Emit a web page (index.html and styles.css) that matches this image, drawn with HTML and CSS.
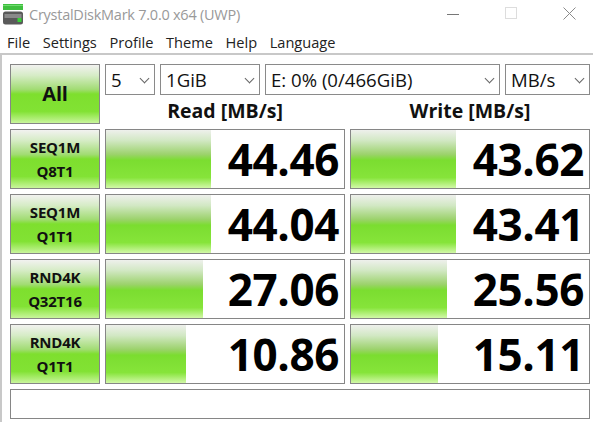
FILE: index.html
```html
<!DOCTYPE html>
<html>
<head>
<meta charset="utf-8">
<link rel="stylesheet" href="styles.css">
</head>
<body>
<div class="window">
  <div class="titlebar">
    <svg class="appicon" width="21" height="21" viewBox="0 0 21 21">
      <rect x="0" y="0" width="20" height="6" fill="#3fbf3f"/>
      <rect x="0" y="1" width="20" height="1" fill="#6fdc6f"/>
      <rect x="0" y="7.5" width="20" height="13" rx="2.5" fill="#5a5a5a"/>
      <rect x="1.5" y="10" width="17" height="4" fill="#8a8a8a"/>
      <rect x="14.5" y="14" width="4" height="4" fill="#37d137"/>
    </svg>
    <span class="title">CrystalDiskMark 7.0.0 x64 (UWP)</span>
    <div class="controls">
      <span class="ctl min"></span>
      <span class="ctl max"></span>
      <svg class="ctl close" width="13" height="13" viewBox="0 0 13 13"><path d="M0.5 0.5 L12.5 12.5 M12.5 0.5 L0.5 12.5" stroke="#8a8a8a" stroke-width="1"/></svg>
    </div>
  </div>
  <div class="menubar">
    <span>File</span><span>Settings</span><span>Profile</span><span>Theme</span><span>Help</span><span>Language</span>
  </div>
  <div class="main">
    <div class="grid">
      <div class="btn all">All</div>
      <div class="topright">
        <div class="combos">
          <div class="combo c1"><span>5</span><i class="chev"></i></div>
          <div class="combo c2"><span>1GiB</span><i class="chev"></i></div>
          <div class="combo c3"><span>E: 0% (0/466GiB)</span><i class="chev"></i></div>
          <div class="combo c4"><span>MB/s</span><i class="chev"></i></div>
        </div>
        <div class="heads">
          <div class="head">Read [MB/s]</div>
          <div class="head">Write [MB/s]</div>
        </div>
      </div>

      <div class="btn">SEQ1M<br>Q8T1</div>
      <div class="cell"><div class="bar" style="width:105px"></div><span class="val">44.46</span></div>
      <div class="cell"><div class="bar" style="width:105px"></div><span class="val">43.62</span></div>

      <div class="btn">SEQ1M<br>Q1T1</div>
      <div class="cell"><div class="bar" style="width:105px"></div><span class="val">44.04</span></div>
      <div class="cell"><div class="bar" style="width:105px"></div><span class="val">43.41</span></div>

      <div class="btn">RND4K<br>Q32T16</div>
      <div class="cell"><div class="bar" style="width:97px"></div><span class="val">27.06</span></div>
      <div class="cell"><div class="bar" style="width:96px"></div><span class="val">25.56</span></div>

      <div class="btn">RND4K<br>Q1T1</div>
      <div class="cell"><div class="bar" style="width:80px"></div><span class="val">10.86</span></div>
      <div class="cell"><div class="bar" style="width:87px"></div><span class="val">15.11</span></div>

      <div class="status"></div>
    </div>
  </div>
</div>
</body>
</html>
```

FILE: styles.css
```css
* { box-sizing: border-box; }
html, body { margin: 0; padding: 0; background: #fff; }
body { width: 593px; height: 422px; overflow: hidden; font-family: "Open Sans", "Noto Sans", sans-serif; }

.titlebar { height: 32px; display: flex; align-items: center; position: relative; }
.appicon { margin-left: 3px; margin-top: -3px; }
.title { margin-left: 5px; font-size: 14.5px; color: #999; margin-top: -3px; letter-spacing: -0.25px; }
.controls { margin-left: auto; display: flex; align-items: center; height: 32px; }
.ctl { display: block; }
.min { width: 12px; height: 1px; background: #777; margin-right: 46px; margin-top: -4px; }
.max { width: 12px; height: 12px; border: 1px solid #ddd; margin-right: 46px; margin-top: -6px; }
.close { margin-right: 17px; margin-top: -6px; }

.menubar { height: 22px; display: flex; align-items: center; padding-left: 7px; font-size: 14.6px; color: #222; margin-top: -1px; }
.menubar span { margin-right: 12.6px; }

.main { border-top: 2px solid #c8c8c8; border-left: 2px solid #c8c8c8; height: 369px; padding: 9px 0 0 8px; }
.grid { display: grid; grid-template-columns: 90px 240px 240px; grid-template-rows: 60px 60px 60px 60px 60px 30px; gap: 5px; }

.btn { border: 1px solid #868686; background: linear-gradient(to bottom, #f2f2f0 0%, #d6ecc6 18%, #a2dc74 42%, #7edf2e 50%, #82e234 80%, #c9f59c 100%); display: flex; align-items: center; justify-content: center; text-align: center; font-weight: 700; font-size: 15px; line-height: 24px; color: #111; letter-spacing: -0.2px; }
.btn.all { font-size: 20px; }

.topright { grid-column: 2 / 4; display: flex; flex-direction: column; }
.combos { display: flex; gap: 5px; height: 31px; }
.combo { border: 1px solid #8a8a8a; height: 31px; display: flex; align-items: center; padding-left: 5px; font-size: 18.6px; color: #111; position: relative; }
.c1 { width: 50px; }
.c2 { width: 100px; }
.c3 { width: 235px; }
.c4 { width: 85px; }
.chev { position: absolute; right: 6px; top: 10px; width: 7px; height: 7px; border-right: 1px solid #666; border-bottom: 1px solid #666; transform: rotate(45deg); }
.heads { display: flex; gap: 5px; flex: 1; }
.head { width: 240px; text-align: center; font-weight: 700; font-size: 19.5px; line-height: 29px; padding-top: 1px; color: #111; }

.cell { border: 1px solid #868686; position: relative; display: flex; align-items: center; justify-content: flex-end; padding-right: 5px; }
.bar { position: absolute; left: 0; top: 0; bottom: 0; background: linear-gradient(to bottom, #eef0ec 0%, #d2e8c4 18%, #9cd26c 42%, #7bdd30 52%, #86e43a 82%, #d2f8a8 100%); }
.val { position: relative; font-weight: 700; font-size: 44px; letter-spacing: -0.4px; color: #000; line-height: 1; }

.status { grid-column: 1 / 4; border: 1px solid #868686; }
```
